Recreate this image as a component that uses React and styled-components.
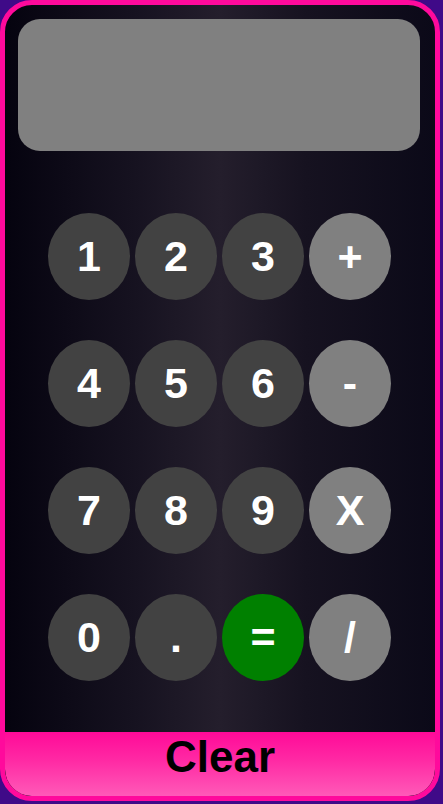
import React from "react";
import styled, { createGlobalStyle } from "styled-components";

const GlobalStyle = createGlobalStyle`
  html, body {
    margin: 0;
    padding: 0;
    background: #3f0a88;
  }
  * {
    box-sizing: border-box;
  }
`;

const Shell = styled.div`
  width: 440px;
  height: 801px;
  border: 5px solid #ff0a9c;
  border-radius: 32px;
  overflow: hidden;
  display: flex;
  flex-direction: column;
  background: linear-gradient(
    to right,
    #05030f 0%,
    #161220 30%,
    #241e2c 50%,
    #161220 70%,
    #0b0918 100%
  );
  font-family: "Liberation Sans", Arial, sans-serif;
`;

const Screen = styled.div`
  margin: 14px 15px 0 13px;
  height: 132px;
  border-radius: 22px;
  background: #808080;
`;

const Keypad = styled.div`
  display: grid;
  grid-template-columns: repeat(4, 82px);
  grid-auto-rows: 87px;
  column-gap: 5px;
  row-gap: 40px;
  justify-content: start;
  padding-left: 43px;
  margin-top: 62px;
  flex: 1;
`;

const Key = styled.button`
  border: none;
  border-radius: 50%;
  padding: 0;
  margin: 0;
  background: ${(p) =>
    p.$kind === "op" ? "#808080" : p.$kind === "eq" ? "#008000" : "#424242"};
  color: #ffffff;
  font-family: inherit;
  font-weight: bold;
  font-size: 43px;
  display: flex;
  align-items: center;
  justify-content: center;
  cursor: pointer;
`;

const ClearButton = styled.button`
  border: none;
  margin: 0;
  padding: 0;
  height: 64px;
  width: 100%;
  border-radius: 0 0 26px 26px;
  background: linear-gradient(to bottom, #ff0a98 0%, #ff2aa4 45%, #ff5ab8 100%);
  color: #000000;
  font-family: inherit;
  font-weight: bold;
  font-size: 44px;
  line-height: 50px;
  display: flex;
  justify-content: center;
  align-items: flex-start;
`;

const keys = [
  ["1"], ["2"], ["3"], ["+", "op"],
  ["4"], ["5"], ["6"], ["-", "op"],
  ["7"], ["8"], ["9"], ["X", "op"],
  ["0"], ["."], ["=", "eq"], ["/", "op"],
];

export default function App() {
  return (
    <>
      <GlobalStyle />
      <Shell>
        <Screen />
        <Keypad>
          {keys.map(([label, kind]) => (
            <Key key={label} $kind={kind}>
              {label}
            </Key>
          ))}
        </Keypad>
        <ClearButton>Clear</ClearButton>
      </Shell>
    </>
  );
}
